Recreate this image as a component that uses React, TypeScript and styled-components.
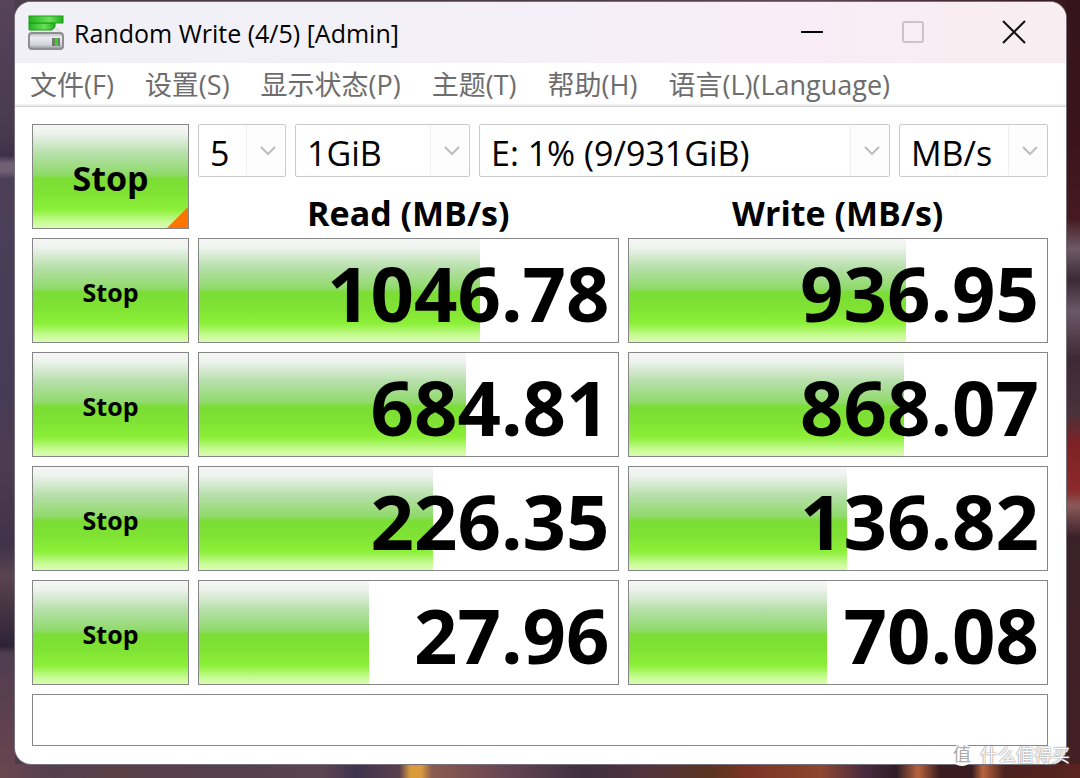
import React from "react";
import styled, { createGlobalStyle } from "styled-components";

const Global = createGlobalStyle`
  * { box-sizing: border-box; }
  body { margin: 0; }
  button, select, input { font-family: inherit; color: inherit; }
`;

const Desktop = styled.div`
  position: relative;
  min-height: 100vh;
  padding: 2px 14px 14px 15px;
  font-family: "Open Sans", "Noto Sans CJK SC", sans-serif;
  color: #000;
  background:
    linear-gradient(90deg, #6b4650 0, #53404f 5%, #5c4048 10%, #54404f 22%, #5b4450 30%, #3f3350 33%, #5a404c 37%, #d99a3c 38%, #d99a3c 39%, #8a5a50 40%, #654452 47%, #3f3040 54%, #55343a 61%, #5a3520 66%, #7a3323 69%, #8d4530 76%, #4b2b40 80%, #2e1d24 83%, #b8633c 85%, #3a1d20 87%, #3a1d20 90%, #b8633c 91%, #4b2220 93%, #5a241f 100%) bottom / 100% 14px no-repeat,
    linear-gradient(180deg, #36141b 0, #3b141b 18%, #45191f 28%, #6d5a66 32%, #3a2a35 36%, #6b5868 40%, #3e2a34 46%, #49323a 53%, #7d2226 57%, #8c2a2c 63%, #8a5a58 65%, #3a2129 69%, #452024 100%) right / 14px 100% no-repeat,
    linear-gradient(180deg, #56435a 0, #473a50 17%, #3d3048 20%, #6f6074 21%, #6f6074 22%, #4d3f58 23%, #463a55 50%, #4d3c50 60%, #40324a 70%, #5a4450 74%, #2e2236 83%, #4f3d50 84%, #6b444f 100%) left / 15px 100% no-repeat,
    linear-gradient(90deg, #4b3b4c 0, #4a3b45 50%, #5c4854 75%, #36141b 100%);
`;

const Window = styled.main`
  background: #fff;
  border-radius: 16px;
  overflow: hidden;
  box-shadow: 0 0 0 1px #77707a;
`;

const TitleBar = styled.header`
  display: flex;
  align-items: center;
  height: 61px;
  padding: 0 2px 0 13px;
  background: linear-gradient(90deg, #f2f0f7 0%, #f3f0f8 45%, #f9edf8 72%, #f8eef1 90%, #f8eef2 100%);
`;

const Title = styled.h1`
  flex: 1;
  margin: 0 0 0 10px;
  font-size: 25px;
  font-weight: 400;
  line-height: 36px;
  white-space: nowrap;
`;

const CaptionButton = styled.button`
  display: grid;
  place-items: center;
  width: 101px;
  height: 61px;
  padding: 0 0 2px;
  border: 0;
  background: none;
`;

const MenuBar = styled.nav`
  display: flex;
  gap: 31px;
  height: 44px;
  padding: 0 15px;
  border-bottom: 1px solid #cfcfcf;
  box-shadow: inset 0 -2px #f0f0f0;
`;

const MenuItem = styled.button`
  padding: 0;
  border: 0;
  background: none;
  color: #6d6d6d;
  font-size: 27px;
  line-height: 40px;
  white-space: nowrap;
`;

const Content = styled.div`
  display: flex;
  flex-direction: column;
  gap: 9px;
  padding: 17px 18px 18px 17px;
`;

const Row = styled.section`
  display: grid;
  grid-template-columns: 157px 1fr 1fr;
  grid-template-rows: 105px;
  gap: 9px;
`;

const greenFill = `linear-gradient(180deg, #f6f6f6 0%, #eef3ee 8%, #b5dfa9 28%, #90da6a 48%, #7bdd35 52%, #7fe233 66%, #8cf038 82%, #c9fb96 94%, #dafcb4 100%)`;

const StopButton = styled.button<{ $large?: boolean }>`
  position: relative;
  padding: 3px 0 0;
  border: 1px solid #868686;
  background: ${greenFill};
  font-size: ${(p) => (p.$large ? 34 : 25)}px;
  font-weight: 700;
`;

const Corner = styled.span`
  position: absolute;
  right: 0;
  bottom: 0;
  width: 21px;
  height: 21px;
  background: #ff7300;
  clip-path: polygon(100% 0, 100% 100%, 0 100%);
`;

const Setup = styled.div`
  grid-column: span 2;
  display: flex;
  flex-direction: column;
`;

const Selectors = styled.div`
  display: grid;
  grid-template-columns: 88px 175px 1fr 149px;
  gap: 9px;
`;

const Headings = styled.div`
  display: grid;
  grid-template-columns: 1fr 1fr;
  gap: 9px;
`;

const Heading = styled.h2`
  margin: 0;
  padding-top: 11px;
  font-size: 34px;
  font-weight: 700;
  line-height: 50px;
  text-align: center;
  white-space: nowrap;
`;

const Combo = styled.div`
  display: grid;
  grid-template-columns: 1fr 38px;
  height: 53px;
  padding: 1px;
  border: 1px solid #cacaca;
  border-radius: 2px;
  background: #fdfdfd;
`;

const ComboSelect = styled.select`
  appearance: none;
  grid-area: 1 / 1 / 2 / 3;
  min-width: 0;
  padding: 4px 38px 0 10px;
  border: 0;
  opacity: 1;
  background: linear-gradient(#efefef, #efefef) right 37px top / 1px 100% no-repeat, linear-gradient(90deg, #fff calc(100% - 38px), #fdfdfd 0);
  font-size: 34px;
  line-height: 44px;
`;

const Arrow = styled.svg`
  grid-area: 1 / 2 / 2 / 3;
  place-self: center;
  margin-left: 5px;
  pointer-events: none;
`;

const Meter = styled.div`
  display: grid;
  grid-template-rows: 100%;
  border: 1px solid #868686;
  background: #fff;
`;

const Bar = styled.div`
  grid-area: 1 / 1;
  background: ${greenFill};
`;

const Score = styled.output`
  grid-area: 1 / 1;
  z-index: 1;
  padding: 4px 8px 0 0;
  font-size: 76px;
  font-weight: 700;
  line-height: 99px;
  text-align: right;
`;

const Comment = styled.input`
  width: 100%;
  height: 52px;
  padding: 0 12px;
  border: 1px solid #868686;
  background: #fff;
  font-size: 25px;
`;

const Watermark = styled.div`
  position: absolute;
  top: 743px;
  right: 10px;
  display: flex;
  align-items: center;
  gap: 7px;
  color: #fff;
  font-size: 18px;
  line-height: 24px;
  text-shadow: 0 0 1px #777, 0 0 2px #999;
`;

const Badge = styled.span`
  width: 22px;
  height: 22px;
  border-radius: 50%;
  background: #fff;
  color: #aaa;
  font-size: 18px;
  line-height: 20px;
  text-align: center;
  text-shadow: none;
`;

const menus = ["文件(F)", "设置(S)", "显示状态(P)", "主题(T)", "帮助(H)", "语言(L)(Language)"];

const selectors = [
  { label: "Test count", value: "5" },
  { label: "Test size", value: "1GiB" },
  { label: "Drive", value: "E: 1% (9/931GiB)" },
  { label: "Unit", value: "MB/s" },
];

const results = [
  { read: ["1046.78", 67.1], write: ["936.95", 66.3] },
  { read: ["684.81", 63.8], write: ["868.07", 65.8] },
  { read: ["226.35", 55.9], write: ["136.82", 52.1] },
  { read: ["27.96", 40.6], write: ["70.08", 47.4] },
] as { read: [string, number]; write: [string, number] }[];

const DriveIcon = () => (
  <svg width="36" height="36" viewBox="0 0 36 36" aria-hidden="true">
    <defs>
      <linearGradient id="green" x2="1" y2="0">
        <stop offset="0" stopColor="#25b320" />
        <stop offset=".6" stopColor="#6be05a" />
        <stop offset="1" stopColor="#22ad1c" />
      </linearGradient>
      <linearGradient id="metal" x2="0" y2="1">
        <stop offset="0" stopColor="#b9b9be" />
        <stop offset=".3" stopColor="#ececf2" />
        <stop offset=".75" stopColor="#d0d0d8" />
        <stop offset="1" stopColor="#8b8b90" />
      </linearGradient>
    </defs>
    <path d="M5 14h25l4 6H2z" fill="#ececf0" stroke="#d2d2d7" />
    <rect x="1" y="18" width="34" height="16" rx="3" fill="url(#metal)" stroke="#8d8d92" strokeWidth="2" />
    <rect x="24" y="23" width="8" height="8" fill="#6d7a6d" />
    <rect x="27" y="23" width="3" height="8" fill="#3fd02e" />
    <path d="M1 8h26v4l-3 3H1z" fill="url(#green)" stroke="#18a014" />
    <rect x="1" y="1" width="34" height="7" fill="url(#green)" stroke="#18a014" />
  </svg>
);

function Result({ label, data }: { label: string; data: [string, number] }) {
  return (
    <Meter>
      <Bar style={{ width: `${data[1]}%` }} />
      <Score aria-label={label}>{data[0]}</Score>
    </Meter>
  );
}

export default function App() {
  return (
    <Desktop>
      <Global />
      <Window>
        <TitleBar>
          <DriveIcon />
          <Title>Random Write (4/5) [Admin]</Title>
          <CaptionButton aria-label="Minimize">
            <svg width="22" height="22"><path d="M0 11h22" stroke="#000" strokeWidth="2" /></svg>
          </CaptionButton>
          <CaptionButton aria-label="Maximize" disabled>
            <svg width="22" height="22"><rect x="1" y="1" width="20" height="20" rx="2" fill="none" stroke="#cbc2cb" strokeWidth="2" /></svg>
          </CaptionButton>
          <CaptionButton aria-label="Close">
            <svg width="24" height="24"><path d="M1 1l22 22M23 1L1 23" stroke="#111" strokeWidth="2" /></svg>
          </CaptionButton>
        </TitleBar>
        <MenuBar>
          {menus.map((m) => <MenuItem key={m}>{m}</MenuItem>)}
        </MenuBar>
        <Content>
          <Row>
            <StopButton $large>Stop<Corner /></StopButton>
            <Setup>
              <Selectors>
                {selectors.map((s) => (
                  <Combo key={s.label}>
                    <ComboSelect aria-label={s.label}><option>{s.value}</option></ComboSelect>
                    <Arrow width="16" height="10" aria-hidden="true">
                      <path d="M1 1l7 7 7-7" fill="none" stroke="#bdbdbd" strokeWidth="2" />
                    </Arrow>
                  </Combo>
                ))}
              </Selectors>
              <Headings>
                <Heading>Read (MB/s)</Heading>
                <Heading>Write (MB/s)</Heading>
              </Headings>
            </Setup>
          </Row>
          {results.map((r) => (
            <Row key={r.read[0]}>
              <StopButton>Stop</StopButton>
              <Result label="Read" data={r.read} />
              <Result label="Write" data={r.write} />
            </Row>
          ))}
          <Comment aria-label="Comment" />
        </Content>
      </Window>
      <Watermark><Badge>值</Badge>什么值得买</Watermark>
    </Desktop>
  );
}
